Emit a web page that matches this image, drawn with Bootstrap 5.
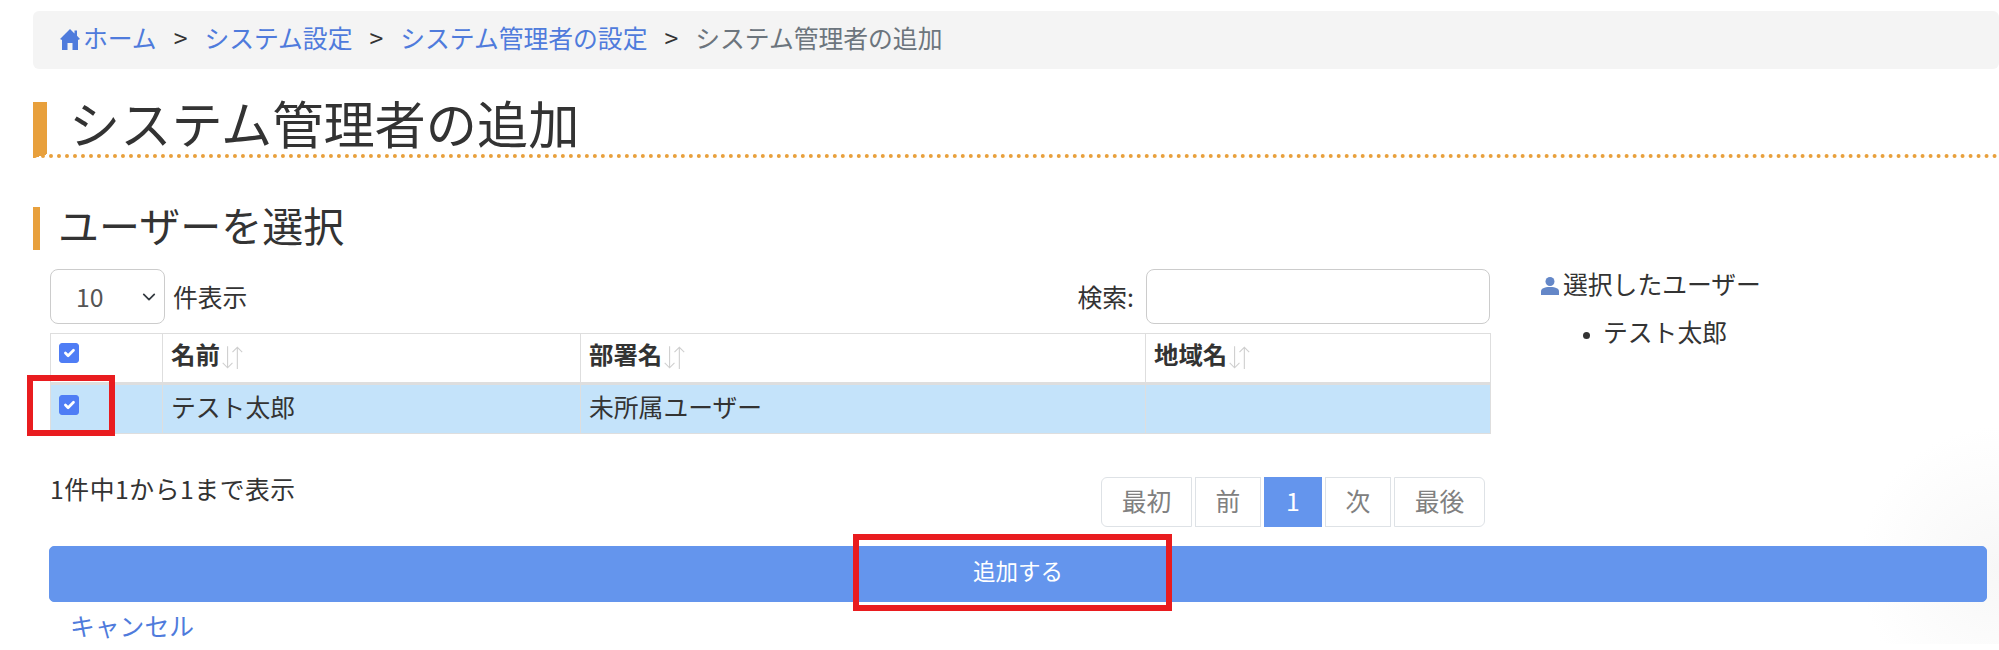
<!DOCTYPE html>
<html lang="ja">
<head>
  <meta charset="UTF-8">
  <meta name="viewport" content="width=device-width, initial-scale=1.0">
  <title>システム管理者の追加</title>
  <link href="https://cdn.jsdelivr.net/npm/bootstrap@5.3.0/dist/css/bootstrap.min.css" rel="stylesheet">
  <style>
    body { font-family: "Noto Sans CJK JP", "Liberation Sans", sans-serif; font-size: 24.8px; color: #333; background: radial-gradient(circle 140px at 100% 88%, #f7f7f7, #fff); overflow: hidden; }
    a { color: #4f7bdc; text-decoration: none; }
    .page-wrap { padding: 11px 0 0 33px; }

    /* breadcrumb */
    .crumb-bar { height: 58px; background: #f4f4f4; border-radius: 6px; padding-left: 27px; line-height: 1; }
    .crumb-bar .breadcrumb { --bs-breadcrumb-divider: ">"; --bs-breadcrumb-margin-bottom: 0; --bs-breadcrumb-item-padding-x: 17px; --bs-breadcrumb-divider-color: #333; height: 53px; align-items: center; font-size: 24.8px; }
    .crumb-bar .breadcrumb-item.active { color: #6c757d; }
    .home-ico { width: 20px; height: 21px; margin-right: 3px; vertical-align: -2px; fill: #4f7bdc; }

    /* headings */
    .head-main { height: 56px; margin: 33px 0 0; padding-left: 22px; border-left: 14px solid #e8a03c; border-bottom: 4px dotted #e8a03c; font-size: 51.2px; font-weight: 400; line-height: 40px; }
    .head-sub { height: 43px; margin: 49px 0 0; padding-left: 18px; border-left: 7px solid #e8a03c; font-size: 41px; font-weight: 400; line-height: 34px; }

    /* table block */
    .main-area { margin: 19px 12px 0 17px; gap: 51px; }
    .tbl-col { width: 1440px; flex: none; }
    .tool-row { height: 55px; }
    .len-select { width: 115px; height: 55px; padding: 0 0 0 25px; font-size: 24.8px; color: #555; border-color: #ccc; border-radius: 8px; background-size: 20px 14px; background-position: right 5px center; }
    .search-input { width: 344px; height: 55px; border-color: #ccc; border-radius: 8px; }
    .search-group { gap: 12px; }
    .tbl-wrap { margin-top: 9px; }
    .user-tbl { table-layout: fixed; width: 1440px; margin-bottom: 0; --bs-table-border-color: #dedede; color: #333; }
    .user-tbl th, .user-tbl td { padding: 0 8px 4px; vertical-align: middle; }
    .user-tbl thead tr { height: 50px; }
    .user-tbl thead th { border-bottom: 3px solid #dedede; font-size: 24.4px; padding-bottom: 7px; }
    .user-tbl tbody tr { height: 50px; }
    .user-tbl tbody td { background-color: #c4e3fa; }
    .c-check { width: 112px; } .c-name { width: 418px; } .c-dept { width: 565px; } .c-area { width: 345px; }
    .tick { width: 20px; height: 20px; margin: 0; display: block; position: relative; top: -2px; }
    .form-check-input.tick { border-radius: 3px; }
    .tick:checked { background-color: #4f7df5; border-color: #4f7df5; }
    .sort-ico { width: 26px; height: 26px; vertical-align: -6px; stroke: #cfcfcf; fill: none; }
    .mark-box { position: absolute; border: 6px solid #e91c1f; pointer-events: none; }
    .mark-check { left: -23px; top: 42px; width: 88px; height: 61px; }
    .mark-submit { left: 804px; top: -12px; width: 319px; height: 77px; }

    /* footer of table */
    .foot-row { margin-top: 43px; padding-right: 5px; height: 50px; }
    .info-text { line-height: 22px; letter-spacing: .55px; }
    .pager { --bs-pagination-font-size: 24.8px; --bs-pagination-color: #777; --bs-pagination-border-color: #dee2e6; --bs-pagination-active-bg: #6495ed; --bs-pagination-active-border-color: #6495ed; --bs-pagination-disabled-bg: #fff; --bs-pagination-disabled-color: #808080; --bs-pagination-disabled-border-color: #dee2e6; --bs-pagination-border-radius: 6px; gap: 3px; margin: 0; }
    .pager .page-link { height: 50px; padding: 0 0 4px; margin: 0 !important; display: flex; align-items: center; justify-content: center; line-height: 1; }
    .pg-wide { width: 91px; } .pg-mid { width: 66px; } .pg-num { width: 58px; }

    /* right side */
    .picked-title { line-height: 28px; }
    .user-ico { width: 18px; height: 18px; margin-right: 4px; vertical-align: -1px; fill: #6487c8; }
    .picked-list { margin: 20px 0 0; padding-left: 62px; line-height: 28px; }
    .picked-list li::marker { font-size: 17px; }

    /* submit */
    .submit-wrap { margin: 19px 12px 0 16px; }
    .btn-add { height: 56px; padding-bottom: 12px; font-size: 22.5px; background: #6495ed; border-color: #6495ed; color: #fff; border-radius: 5px; }
    .cancel-link { display: inline-block; margin: 8px 0 0 37px; line-height: 30px; }
  </style>
</head>
<body>

<div class="page-wrap">
  <!-- breadcrumb -->
  <nav class="crumb-bar" aria-label="breadcrumb">
    <ol class="breadcrumb">
      <li class="breadcrumb-item"><a href="#"><svg class="home-ico" viewBox="0 0 20 21"><path d="M10 0 14.5 4.4V1.5H17V6.8L20 10 18 11V21H12.5V14H7.5V21H2V11L0 10Z"/></svg>ホーム</a></li>
      <li class="breadcrumb-item"><a href="#">システム設定</a></li>
      <li class="breadcrumb-item"><a href="#">システム管理者の設定</a></li>
      <li class="breadcrumb-item active" aria-current="page">システム管理者の追加</li>
    </ol>
  </nav>

  <h1 class="head-main">システム管理者の追加</h1>
  <h2 class="head-sub">ユーザーを選択</h2>

  <div class="d-flex main-area">
    <div class="tbl-col">
      <div class="d-flex justify-content-between align-items-center tool-row">
        <div class="d-flex align-items-center gap-2">
          <select class="form-select len-select">
            <option>10</option>
            <option>25</option>
            <option>50</option>
          </select>
          <span>件表示</span>
        </div>
        <div class="d-flex align-items-center search-group">
          <label for="searchBox">検索:</label>
          <input id="searchBox" type="text" class="form-control search-input">
        </div>
      </div>

      <div class="position-relative tbl-wrap">
        <table class="table table-bordered user-tbl">
          <colgroup>
            <col class="c-check"><col class="c-name"><col class="c-dept"><col class="c-area">
          </colgroup>
          <thead>
            <tr>
              <th><input class="form-check-input tick" type="checkbox" checked></th>
              <th>名前<svg class="sort-ico" viewBox="0 0 24 24"><path d="M7 2V22M2.5 17.5 7 22 11.5 17.5M16 23V3M11.5 7.5 16 3 20.5 7.5"/></svg></th>
              <th>部署名<svg class="sort-ico" viewBox="0 0 24 24"><path d="M7 2V22M2.5 17.5 7 22 11.5 17.5M16 23V3M11.5 7.5 16 3 20.5 7.5"/></svg></th>
              <th>地域名<svg class="sort-ico" viewBox="0 0 24 24"><path d="M7 2V22M2.5 17.5 7 22 11.5 17.5M16 23V3M11.5 7.5 16 3 20.5 7.5"/></svg></th>
            </tr>
          </thead>
          <tbody>
            <tr>
              <td><input class="form-check-input tick" type="checkbox" checked></td>
              <td>テスト太郎</td>
              <td>未所属ユーザー</td>
              <td></td>
            </tr>
          </tbody>
        </table>
        <div class="mark-box mark-check"></div>
      </div>

      <div class="d-flex justify-content-between foot-row">
        <div class="info-text">1件中1から1まで表示</div>
        <ul class="pagination pager">
          <li class="page-item disabled"><a class="page-link pg-wide" href="#">最初</a></li>
          <li class="page-item disabled"><a class="page-link pg-mid" href="#">前</a></li>
          <li class="page-item active"><a class="page-link pg-num" href="#">1</a></li>
          <li class="page-item disabled"><a class="page-link pg-mid" href="#">次</a></li>
          <li class="page-item disabled"><a class="page-link pg-wide" href="#">最後</a></li>
        </ul>
      </div>
    </div>

    <div>
      <div class="picked-title"><svg class="user-ico" viewBox="0 0 18 18"><circle cx="9" cy="4.5" r="4.5"/><path d="M0 18V14.5C0 11.5 3 10 9 10S18 11.5 18 14.5V18Z"/></svg>選択したユーザー</div>
      <ul class="picked-list">
        <li>テスト太郎</li>
      </ul>
    </div>
  </div>

  <div class="position-relative submit-wrap">
    <button type="button" class="btn w-100 btn-add">追加する</button>
    <div class="mark-box mark-submit"></div>
  </div>
  <a href="#" class="cancel-link">キャンセル</a>
</div>

<script src="https://cdn.jsdelivr.net/npm/bootstrap@5.3.0/dist/js/bootstrap.bundle.min.js"></script>
</body>
</html>
